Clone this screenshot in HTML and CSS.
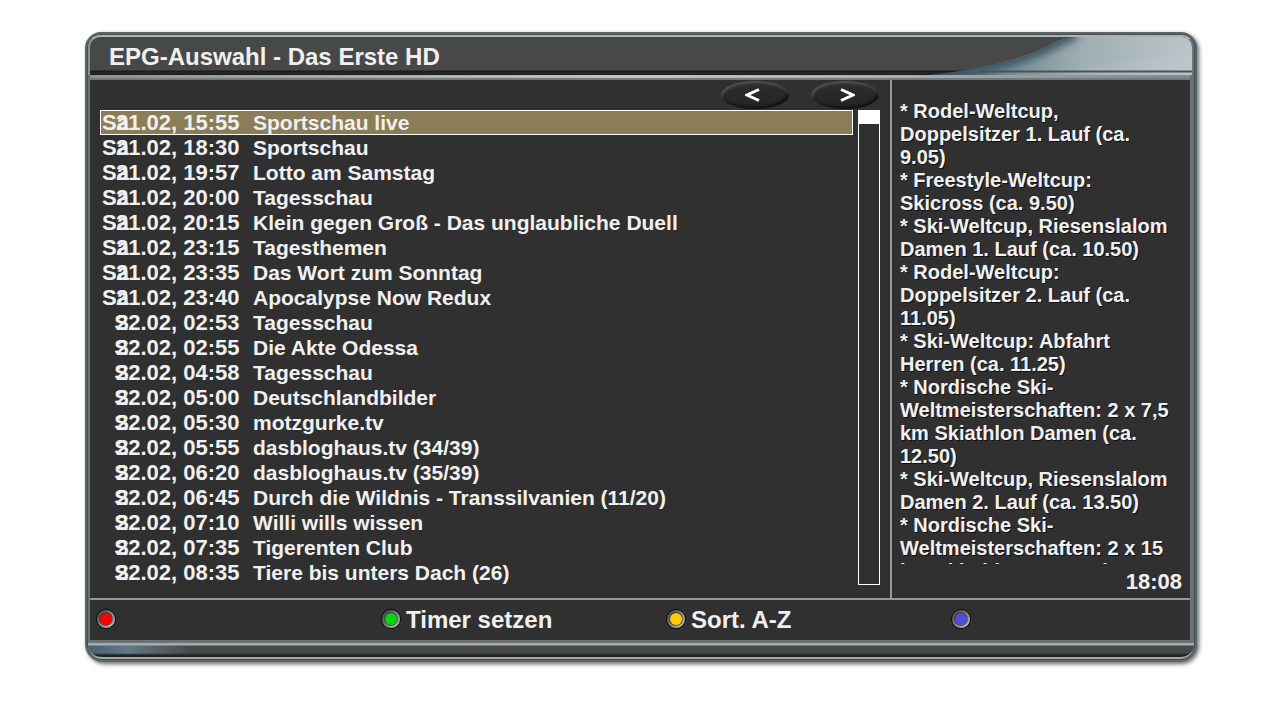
FILE: index.html
```html
<!DOCTYPE html>
<html lang="de">
<head>
<meta charset="utf-8">
<title>EPG-Auswahl</title>
<link rel="stylesheet" href="styles.css">
</head>
<body>
<main class="panel">
  <header class="titlebar">
    <svg class="swoosh" viewBox="0 0 272 38" preserveAspectRatio="none" aria-hidden="true">
      <defs>
        <linearGradient id="sky" x1="0" y1="0" x2="1" y2="0">
          <stop offset="0" stop-color="#1f3f50"/>
          <stop offset=".3" stop-color="#718a94"/>
          <stop offset=".6" stop-color="#a0aeb3"/>
          <stop offset="1" stop-color="#bac5c9"/>
        </linearGradient>
        <clipPath id="wing"><path d="M10 38C70 32 108 20 134 6Q144 1 156 0H272V38Z"/></clipPath>
        <filter id="soft" x="-10%" y="-30%" width="120%" height="160%"><feGaussianBlur stdDeviation="4"/></filter>
      </defs>
      <g clip-path="url(#wing)">
        <rect width="272" height="38" fill="url(#sky)"/>
        <path d="M120 38Q220 30 272 8V38Z" fill="#c0c9cb" opacity=".4" filter="url(#soft)"/>
        <path d="M0 38C70 32 108 20 134 6Q144 1 156 -4" fill="none" stroke="#3a5561" stroke-width="12" filter="url(#soft)"/>
      </g>
      <path d="M60 34.500H272" stroke="#46545a" stroke-width="2"/>
    </svg>
    <h1 class="title">EPG-Auswahl - Das Erste HD</h1>
  </header>
  <div class="frame">
    <div class="content">
      <section class="guide">
        <nav class="pager">
          <button class="oval" aria-label="Zurück"><svg viewBox="0 0 16 14" aria-hidden="true"><path d="M14 1.500L2 7L14 12.500"/></svg></button>
          <button class="oval" aria-label="Weiter"><svg viewBox="0 0 16 14" aria-hidden="true"><path d="M2 1.500L14 7L2 12.500"/></svg></button>
        </nav>
        <div class="listing">
          <table class="events">
            <colgroup><col class="col-day"><col class="col-date"><col></colgroup>
            <tbody>
              <tr class="selected"><td>Sa</td><td><span class="when">21.02, 15:55</span></td><td>Sportschau live</td></tr>
              <tr><td>Sa</td><td><span class="when">21.02, 18:30</span></td><td>Sportschau</td></tr>
              <tr><td>Sa</td><td><span class="when">21.02, 19:57</span></td><td>Lotto am Samstag</td></tr>
              <tr><td>Sa</td><td><span class="when">21.02, 20:00</span></td><td>Tagesschau</td></tr>
              <tr><td>Sa</td><td><span class="when">21.02, 20:15</span></td><td>Klein gegen Groß - Das unglaubliche Duell</td></tr>
              <tr><td>Sa</td><td><span class="when">21.02, 23:15</span></td><td>Tagesthemen</td></tr>
              <tr><td>Sa</td><td><span class="when">21.02, 23:35</span></td><td>Das Wort zum Sonntag</td></tr>
              <tr><td>Sa</td><td><span class="when">21.02, 23:40</span></td><td>Apocalypse Now Redux</td></tr>
              <tr><td>S</td><td><span class="when">22.02, 02:53</span></td><td>Tagesschau</td></tr>
              <tr><td>S</td><td><span class="when">22.02, 02:55</span></td><td>Die Akte Odessa</td></tr>
              <tr><td>S</td><td><span class="when">22.02, 04:58</span></td><td>Tagesschau</td></tr>
              <tr><td>S</td><td><span class="when">22.02, 05:00</span></td><td>Deutschlandbilder</td></tr>
              <tr><td>S</td><td><span class="when">22.02, 05:30</span></td><td>motzgurke.tv</td></tr>
              <tr><td>S</td><td><span class="when">22.02, 05:55</span></td><td>dasbloghaus.tv (34/39)</td></tr>
              <tr><td>S</td><td><span class="when">22.02, 06:20</span></td><td>dasbloghaus.tv (35/39)</td></tr>
              <tr><td>S</td><td><span class="when">22.02, 06:45</span></td><td>Durch die Wildnis - Transsilvanien (11/20)</td></tr>
              <tr><td>S</td><td><span class="when">22.02, 07:10</span></td><td>Willi wills wissen</td></tr>
              <tr><td>S</td><td><span class="when">22.02, 07:35</span></td><td>Tigerenten Club</td></tr>
              <tr><td>S</td><td><span class="when">22.02, 08:35</span></td><td>Tiere bis unters Dach (26)</td></tr>
            </tbody>
          </table>
          <div class="scrollbar"><div class="thumb"></div></div>
        </div>
      </section>
      <aside class="side">
        <p class="details">* Rodel-Weltcup,<br>Doppelsitzer 1. Lauf (ca.<br>9.05)<br>* Freestyle-Weltcup:<br>Skicross (ca. 9.50)<br>* Ski-Weltcup, Riesenslalom<br>Damen 1. Lauf (ca. 10.50)<br>* Rodel-Weltcup:<br>Doppelsitzer 2. Lauf (ca.<br>11.05)<br>* Ski-Weltcup: Abfahrt<br>Herren (ca. 11.25)<br>* Nordische Ski-<br>Weltmeisterschaften: 2 x 7,5<br>km Skiathlon Damen (ca.<br>12.50)<br>* Ski-Weltcup, Riesenslalom<br>Damen 2. Lauf (ca. 13.50)<br>* Nordische Ski-<br>Weltmeisterschaften: 2 x 15<br>km Skiathlon Herren (ca.</p>
        <time class="clock">18:08</time>
      </aside>
    </div>
    <footer class="keys">
      <button class="key" aria-label="Rot"><span class="led red"></span></button>
      <button class="key"><span class="led green"></span>Timer setzen</button>
      <button class="key"><span class="led yellow"></span>Sort. A-Z</button>
      <button class="key" aria-label="Blau"><span class="led blue"></span></button>
    </footer>
  </div>
  <div class="base"></div>
</main>
</body>
</html>
```
FILE: styles.css
```css
*,
*::before {
  box-sizing: border-box;
}

body {
  margin: 0;
  padding: 32px 83px 40px 85px;
  background: #fff;
  color: #f0f0f0;
  font: bold 22px/25px "Liberation Sans", Arial, sans-serif;
}

button {
  margin: 0;
  padding: 0;
  border: 0;
  background: none;
  color: inherit;
  font: inherit;
}

.panel {
  padding: 1px;
  border: 2px solid #59666a;
  border-radius: 16px 16px 18px 18px;
  background: #454d50;
  box-shadow: 2px 2px 4px rgba(0, 0, 0, .6);
}

.titlebar {
  position: relative;
  height: 40px;
  padding-left: 19px;
  overflow: hidden;
  border-top: 2px solid #b0b0b0;
  border-left: 2px solid #8b9090;
  border-right: 2px solid #65777e;
  border-radius: 12px 12px 0 0;
  background: linear-gradient(#484848 33px, #1b1b1b 34px, #2b2727 36px, #1b1b1b 38px);
}

.swoosh {
  position: absolute;
  top: 0;
  right: 0;
  width: 272px;
  height: 38px;
}

.title {
  position: relative;
  margin: 0;
  font-size: 24px;
  line-height: 40px;
}

.frame {
  border: solid #697377;
  border-width: 0 4px 0 2px;
  background: #303030;
}

.frame::before {
  content: "";
  display: block;
  height: 5px;
  border-bottom: 2px solid #70797b;
  background: linear-gradient(90deg, #929292, #c4c4c4 50%, #aaa 75%, #7f898d);
}

.content {
  display: flex;
  border-bottom: 2px solid #999;
}

.guide {
  flex: 1;
  padding: 0 10px 13px;
}

.pager {
  display: flex;
  justify-content: flex-end;
  gap: 22px;
  height: 30px;
  padding: 1px 1px 0 0;
}

.oval {
  display: flex;
  align-items: center;
  justify-content: center;
  width: 68px;
  height: 28px;
  border-radius: 50%;
  background: linear-gradient(#2e2e2e, #242424);
  box-shadow: inset 1px 2px 3px #555, inset -2px -2px 3px #101010;
}

.oval svg {
  width: 16px;
  height: 14px;
  fill: none;
  stroke: #fff;
  stroke-width: 3;
}

.oval:first-child svg {
  margin-right: 4px;
}

.oval:last-child svg {
  margin-left: 4px;
}

.listing {
  display: flex;
  gap: 5px;
}

.events {
  flex: 1;
  table-layout: fixed;
  border-collapse: collapse;
}

.events td {
  height: 25px;
  padding: 0;
  line-height: 25px;
  white-space: nowrap;
}

.events td:first-child {
  text-align: right;
}

.events td:last-child {
  font-size: 21px;
}

.col-day {
  width: 29px;
}

.col-date {
  width: 124px;
}

.when {
  margin-left: -13px;
}

.selected {
  background: #8b7d58;
  outline: 1px solid #fff;
  outline-offset: -1px;
}

.scrollbar {
  width: 22px;
  border: 1px solid #fff;
}

.thumb {
  height: 13px;
  background: #fff;
}

.side {
  display: flex;
  flex-direction: column;
  width: 300px;
  padding: 20px 8px 0;
  border-left: 2px solid #999;
}

.details {
  flex: 1;
  contain: size;
  margin: 0;
  overflow: hidden;
  font-size: 20px;
  line-height: 23px;
  white-space: nowrap;
  text-shadow: 1px 1px 0 #111;
}

.clock {
  padding-top: 2px;
  line-height: 32px;
  text-align: right;
}

.keys {
  display: grid;
  grid-template-columns: 285fr 285fr 285fr 239fr;
  height: 40px;
  padding-left: 6px;
}

.key {
  display: flex;
  align-items: center;
  gap: 5px;
  font-size: 24px;
  line-height: 28px;
}

.led {
  display: flex;
  width: 20px;
  height: 20px;
  margin-bottom: 2px;
  padding: 3px;
  border: 1px solid #080808;
  border-radius: 50%;
  background: linear-gradient(135deg, #555 15%, #888 50%, #bbb 85%);
}

.led::before {
  content: "";
  flex: 1;
  border-radius: 50%;
  background: currentColor;
  box-shadow: 0 0 1px 1px rgba(0, 0, 0, .5);
}

.red {
  color: #f00;
}

.green {
  color: #00d80b;
}

.yellow {
  color: #fc0;
}

.blue {
  color: #514cdb;
}

.base {
  height: 19px;
  border-top: 3px solid #697377;
  border-bottom: 2px solid #a3a7a8;
  border-radius: 0 0 14px 14px;
  background:
    linear-gradient(#aaa 2px, transparent 3px, transparent 10px, #242424 12px),
    linear-gradient(100deg, #47616e, #607985 40px, #484848 105px);
}
```
